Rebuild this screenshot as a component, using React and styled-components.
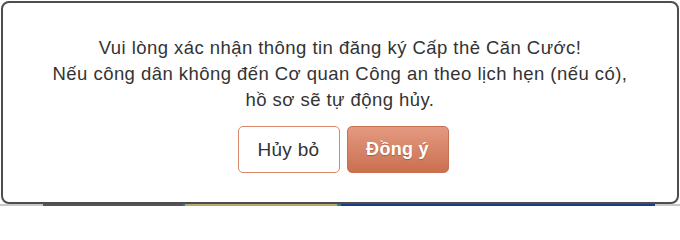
import React from "react";
import styled, { createGlobalStyle } from "styled-components";

const GlobalStyle = createGlobalStyle`
  html, body {
    margin: 0;
    padding: 0;
    background: #ffffff;
    font-family: "Liberation Sans", Arial, sans-serif;
  }
`;

const Page = styled.div`
  width: 680px;
  height: 206px;
  display: flex;
  flex-direction: column;
  overflow: hidden;
`;

const Dialog = styled.div`
  box-sizing: border-box;
  height: 204px;
  margin: 1px 1px 0 1px;
  border: 2px solid #4d4d4d;
  border-radius: 8px;
  background: #ffffff;
  display: flex;
  flex-direction: column;
  align-items: center;
  padding-top: 32px;
`;

const Message = styled.p`
  margin: 0;
  font-size: 18.5px;
  letter-spacing: 0.45px;
  line-height: 26px;
  color: #333333;
  text-align: center;
`;

const Actions = styled.div`
  display: flex;
  gap: 7px;
  margin-top: 13px;
  margin-left: 6px;
`;

const Button = styled.button`
  box-sizing: border-box;
  width: 102px;
  height: 47px;
  border-radius: 5px;
  font-family: "Liberation Sans", Arial, sans-serif;
  font-size: ${(p) => (p.$primary ? "18px" : "19px")};
  letter-spacing: 0.3px;
  cursor: pointer;
  border: 1px solid ${(p) => (p.$primary ? "#c96f52" : "#d9876a")};
  color: ${(p) => (p.$primary ? "#ffffff" : "#333333")};
  font-weight: ${(p) => (p.$primary ? "bold" : "normal")};
  background: ${(p) =>
    p.$primary ? "linear-gradient(#e39a80, #cb6f50)" : "#ffffff"};
  text-shadow: ${(p) => (p.$primary ? "0 1px 1px rgba(0,0,0,0.25)" : "none")};
`;

const Strip = styled.div`
  display: flex;
  height: 2px;
`;

const Segment = styled.div`
  width: ${(p) => p.$w}px;
  background: ${(p) => p.$c};
`;

const segments = [
  { w: 43, c: "#c8c8c8" },
  { w: 140, c: "#555555" },
  { w: 2, c: "#2f7f86" },
  { w: 152, c: "#b8a86a" },
  { w: 4, c: "#2f7f86" },
  { w: 314, c: "#1f3a86" },
  { w: 25, c: "#c8c8c8" },
];

export default function App() {
  return (
    <Page>
      <GlobalStyle />
      <Dialog>
        <Message>
          Vui lòng xác nhận thông tin đăng ký Cấp thẻ Căn Cước!
          <br />
          Nếu công dân không đến Cơ quan Công an theo lịch hẹn (nếu có),
          <br />
          hồ sơ sẽ tự động hủy.
        </Message>
        <Actions>
          <Button>Hủy bỏ</Button>
          <Button $primary>Đồng ý</Button>
        </Actions>
      </Dialog>
      <Strip>
        {segments.map((s, i) => (
          <Segment key={i} $w={s.w} $c={s.c} />
        ))}
      </Strip>
    </Page>
  );
}
